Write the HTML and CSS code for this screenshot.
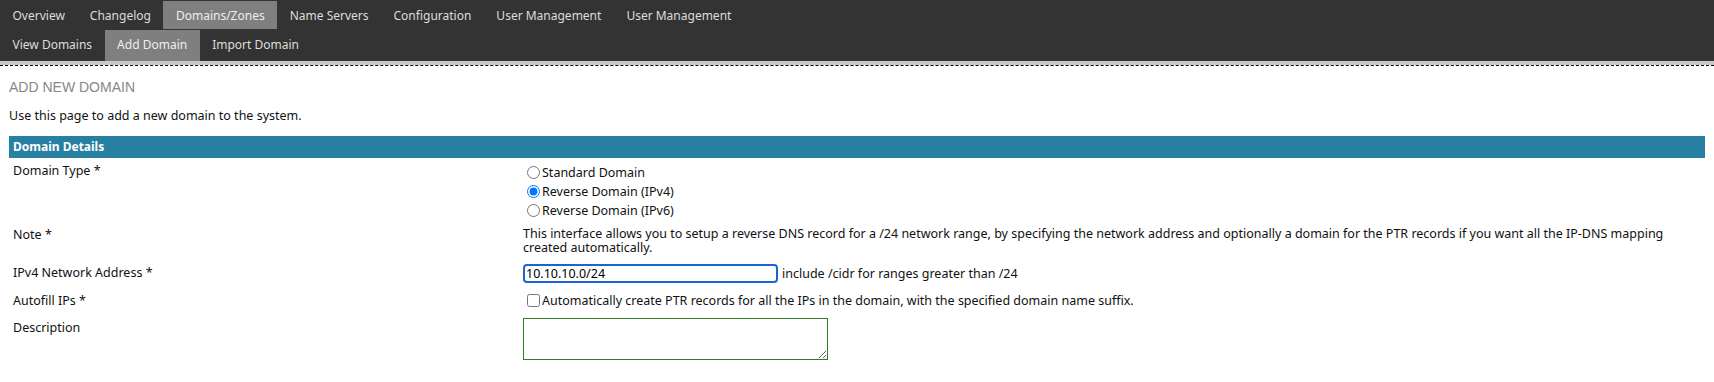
FILE: index.html
```html
<!DOCTYPE html>
<html lang="en">
	<head>
		<meta charset="UTF-8" />
		<meta name="viewport" content="width=device-width, initial-scale=1.0" />
		<title>Add Domain</title>
		<link rel="stylesheet" href="styles.css">
	</head>
	<body>
		<div class="nav">
			<ul class="nav-main">
				<li><a href="#">Overview</a></li>
				<li><a href="#">Changelog</a></li>
				<li class="active"><a href="#">Domains/Zones</a></li>
				<li><a href="#">Name Servers</a></li>
				<li><a href="#">Configuration</a></li>
				<li><a href="#">User Management</a></li>
				<li><a href="#">User Management</a></li>
			</ul>
			<ul class="nav-sub">
				<li><a href="#">View Domains</a></li>
				<li class="active"><a href="#">Add Domain</a></li>
				<li><a href="#">Import Domain</a></li>
			</ul>
		</div>
		<div class="nav-line"></div>

		<div class="content">
			<h2>ADD NEW DOMAIN</h2>
			<p class="intro">Use this page to add a new domain to the system.</p>

			<table class="form-table">
				<tr>
					<th colspan="2">Domain Details</th>
				</tr>
				<tr class="row-type">
					<td class="label">Domain Type *</td>
					<td class="value radios">
						<label><input type="radio" name="type" value="standard">Standard Domain</label>
						<label><input type="radio" name="type" value="ipv4" checked>Reverse Domain (IPv4)</label>
						<label><input type="radio" name="type" value="ipv6">Reverse Domain (IPv6)</label>
					</td>
				</tr>
				<tr class="row-note">
					<td class="label">Note *</td>
					<td class="value note">This interface allows you to setup a reverse DNS record for a /24 network range, by specifying the network address and optionally a domain for the PTR records if you want all the IP-DNS mapping<br>created automatically.</td>
				</tr>
				<tr class="row-address">
					<td class="label">IPv4 Network Address *</td>
					<td class="value">
						<div class="inline-field">
							<input type="text" class="text-input" value="10.10.10.0/24">
							<span>include /cidr for ranges greater than /24</span>
						</div>
					</td>
				</tr>
				<tr class="row-autofill">
					<td class="label">Autofill IPs *</td>
					<td class="value"><label><input type="checkbox" class="check">Automatically create PTR records for all the IPs in the domain, with the specified domain name suffix.</label></td>
				</tr>
				<tr class="row-desc">
					<td class="label">Description</td>
					<td class="value"><textarea class="desc"></textarea></td>
				</tr>
			</table>
		</div>
	</body>
</html>
```

FILE: styles.css
```css
body {
	margin: 0;
	font-family: "Noto Sans", "DejaVu Sans", sans-serif;
	font-size: 12.5px;
	color: #111;
	background-color: white;
}
.nav {
	background-color: #333;
	padding-top: 1px;
	font-size: 12px;
}
.nav ul {
	list-style: none;
	margin: 0;
	padding: 0;
	display: flex;
}
.nav a {
	display: block;
	padding: 0 12.5px;
	color: #ddd;
	text-decoration: none;
}
.nav-main {
	margin-bottom: 1px !important;
}
.nav-main a {
	line-height: 26px;
	padding-top: 2px;
}
.nav-sub a {
	line-height: 29px;
	padding-bottom: 2px;
}
.nav li.active a {
	background-color: #7f7f7f;
	color: #eee;
}
.nav-line {
	border-top: 4px solid #c8c8c8;
	border-bottom: 1px dashed #000;
}
.content {
	padding: 0 9px;
}
h2 {
	font-family: "Liberation Sans", Arial, sans-serif;
	font-size: 14px;
	font-weight: normal;
	color: #888;
	margin: 13px 0 0;
	line-height: 16px;
}
.intro {
	margin: 13px 0 0;
	line-height: 15px;
}
.form-table {
	width: 100%;
	border-collapse: collapse;
	margin-top: 13px;
}
.form-table th {
	background-color: #2780a1;
	color: white;
	text-align: left;
	font-weight: bold;
	padding: 0 4px;
	height: 22px;
	line-height: 22px;
	font-size: 12px;
}
.form-table td {
	vertical-align: top;
	line-height: 15px;
	padding: 6px 3px 1px;
}
.form-table td.label {
	width: 504px;
	padding-left: 4px;
}
.radios label {
	display: block;
	line-height: 19px;
}
input[type="radio"],
.check {
	margin: 0 2px 0 4px;
	vertical-align: -2px;
}
.row-type .label {
	padding-top: 5px;
}
.row-type .value {
	padding-top: 5px;
}
.note {
	line-height: 14px !important;
	padding-bottom: 4px !important;
}
.inline-field {
	display: flex;
	align-items: center;
	gap: 4px;
	margin-top: -1px;
}
.row-address .value {
	padding-bottom: 4px;
}
.text-input {
	width: 255px;
	height: 19px;
	box-sizing: border-box;
	border: 2px solid #1766d6;
	border-radius: 4px;
	padding: 0 1px;
	font-family: inherit;
	font-size: 12.5px;
	outline: none;
	margin: 0;
}
.row-autofill .value {
	padding-bottom: 6px;
}
.row-desc .value {
	padding-top: 4px;
}
.desc {
	width: 305px;
	height: 42px;
	box-sizing: border-box;
	border: 1px solid #2e7d1e;
	margin: 0;
	vertical-align: top;
}
```
